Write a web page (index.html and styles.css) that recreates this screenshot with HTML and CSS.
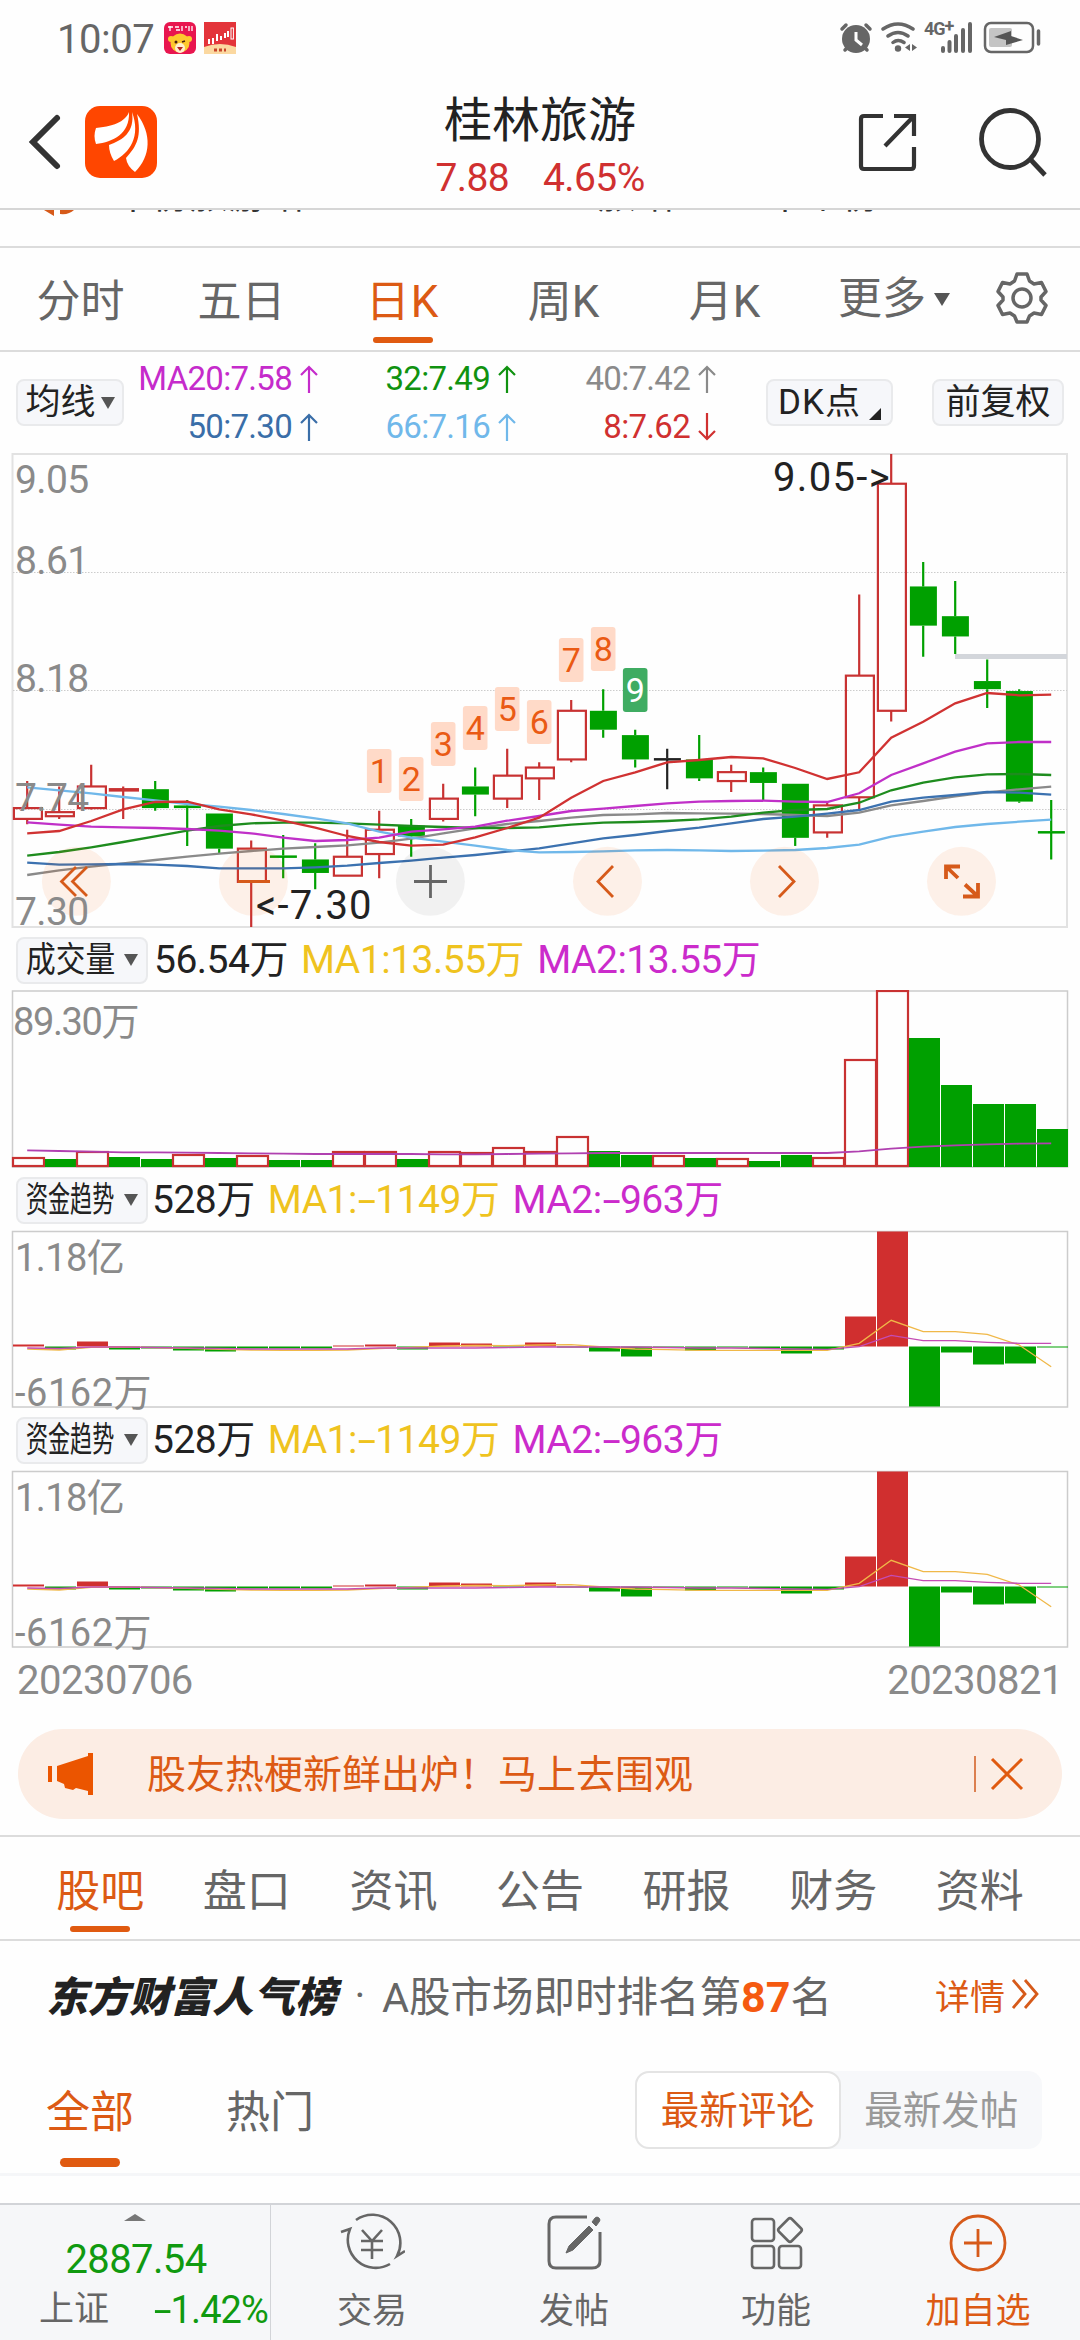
FILE: index.html
```
<!DOCTYPE html>
<html lang="zh">
<head>
    <meta charset="UTF-8">
    <title>桂林旅游</title>
    <link rel="stylesheet" href="styles.css">
</head>
<body>
    <!-- 状态栏 -->
    <div class="status">
        <span class="time">10:07</span>
        <svg class="app-icon" width="32" height="32" viewBox="0 0 32 32">
            <rect width="32" height="32" rx="6" fill="#e8164f"/>
            <path d="M4 5h5M6 4v5M11 5h4M12 8h4M18 4v5M21 5h2M25 4v5M28 4v5" stroke="#fff" stroke-width="1.3"/>
            <circle cx="16" cy="21" r="9.5" fill="#fdc92e"/>
            <circle cx="7" cy="17" r="3" fill="#fdc92e"/><circle cx="25" cy="17" r="3" fill="#fdc92e"/>
            <circle cx="16" cy="26" r="5" fill="#fff0d0"/>
            <circle cx="12" cy="20" r="1.5" fill="#4a2010"/><path d="M18 20l3-1" stroke="#4a2010" stroke-width="1.5"/>
            <path d="M13 25h6l-3 4z" fill="#b5231d"/>
        </svg>
        <svg class="app-icon" width="32" height="32" viewBox="0 0 32 32">
            <rect width="32" height="32" fill="#e3343a"/>
            <path d="M0 25q16-6 32 0v7H0z" fill="#fbd8a0"/>
            <path d="M5 17v5M9 16v6M13 12v7M17 14v4M21 11v5M24 9v6" stroke="#fff" stroke-width="2"/>
            <rect x="27" y="6" width="2.4" height="11" fill="none" stroke="#fff"/>
            <path d="M10 28h3M15 28h3M20 28h2" stroke="#c8452a" stroke-width="3"/>
        </svg>
        <svg class="sys" width="205" height="34" viewBox="838 21 205 34" fill="none" stroke="#666">
            <circle cx="856" cy="39" r="14" fill="#666" stroke="none"/>
            <path d="M842 29l4-4M870 29l-4-4M845 50l3-3M867 50l-3-3" stroke-width="3.5" stroke-linecap="round"/>
            <path d="M856 32v8l6 5" stroke="#fff" stroke-width="3"/>
            <path d="M883 29q15-10 30 0M888 36q10-7 20 0M893 42.500q5-4 11 0" stroke-width="3.500" stroke-linecap="round"/>
            <circle cx="898" cy="48.500" r="3.200" fill="#666" stroke="none"/>
            <path d="M910 44v7l-5-3.500zM912 44v7l5-3.500z" fill="#666" stroke="none"/>
            <path d="M943 48v3M949.500 42v9M956 36v15M963 30v21M970 24v27" stroke-width="4" stroke-linecap="round"/>
            <text x="924" y="35" class="net">4G<tspan dy="-3">+</tspan></text>
            <rect x="985" y="23" width="48" height="29" rx="6" stroke-width="2.500"/>
            <rect x="989" y="28" width="23" height="19" rx="2" fill="#c4c4c4" stroke="none"/>
            <path d="M994 37l17 -6v5l12 4-17 5v-5z" fill="#555" stroke="none"/>
            <path d="M1038.500 31v13" stroke-width="3.500" stroke-linecap="round"/>
        </svg>
    </div>

    <!-- 顶部标题 -->
    <div class="header">
        <svg class="back" width="40" height="60" viewBox="0 0 40 60"><path d="M30 6L6 30l24 24" fill="none" stroke="#333" stroke-width="6" stroke-linecap="round"/></svg>
        <svg class="logo" width="72" height="72" viewBox="0 0 72 72">
            <rect width="72" height="72" rx="15" fill="#ff4600"/>
            <g fill="#fff">
                <path d="M44 6C41 14 32 20 11 22Q8 30 11 38C28 36 45 28 44 6z"/>
                <path d="M47 6C50 26 38 34 24 39Q24 47 29 55C45 47 56 30 47 6z"/>
                <path d="M52 8C57 30 52 40 41 52Q42 60 50 66C66 50 67 28 52 8z"/>
            </g>
        </svg>
        <div class="title">
            <h1>桂林旅游</h1>
            <p><span>7.88</span><span>4.65%</span></p>
        </div>
        <svg class="share" width="62" height="62" viewBox="0 0 62 62" fill="none" stroke="#333" stroke-width="4.200">
            <path d="M26 4H7Q4 4 4 7V54Q4 57 7 57H54Q57 57 57 54V35M37 4H57V24M57 4L28 34"/>
        </svg>
        <svg class="search" width="72" height="72" viewBox="0 0 72 72" fill="none" stroke="#333" stroke-width="4.800">
            <circle cx="33" cy="33" r="28.500"/><path d="M54 54l14 15"/>
        </svg>
    </div>
    <div class="strip">
        <svg width="40" height="10" viewBox="0 0 40 10" fill="#d65a1a"><path d="M4 0h10v6zM20 0h14q-5 5-14 4z"/></svg>
        <span class="s1">十份旅游结</span><span class="s2">6</span><span class="s3">旅结</span><span class="s4">十个份</span>
    </div>

    <!-- K线周期 -->
    <div class="period">
        <span>分时</span><span>五日</span><span class="on">日K</span><span>周K</span><span>月K</span>
        <span class="more">更多<i></i></span>
        <svg width="54" height="54" viewBox="0 0 54 54" fill="none" stroke="#666" stroke-width="3.500" stroke-linejoin="round">
            <path d="M22 3h10l2.500 7 4.500 3 7.500-1.500 4.500 9-5 5.500v3l5 5.500-4.500 9-7.500-1.500-4.500 3-2.500 6H22l-2.500-6-4.500-3-7.500 1.500-4.500-9 5-5.500v-3l-5-5.500 4.500-9L15 13l4.500-3z"/>
            <circle cx="27" cy="27" r="9"/>
        </svg>
    </div>

    <div class="ma-row">
        <div class="btn b-ma">均线<i></i></div>
        <div class="ma-grid" id="maGrid"></div>
        <div class="btn b-dk">DK点<i class="corner"></i></div>
        <div class="btn b-fq">前复权</div>
    </div>
    <svg class="chart" id="kline" width="1080" height="480" viewBox="0 450 1080 480"></svg>

    <div class="ind-row vol">
        <div class="btn ind"><b class="n3">成交量</b><i></i></div>
        <span>56.54万</span><span class="y">MA1:13.55万</span><span class="p">MA2:13.55万</span>
    </div>
    <svg class="chart" id="volume" width="1080" height="180" viewBox="0 990 1080 180"></svg>

    <div class="ind-row">
        <div class="btn ind"><b class="n4">资金趋势</b><i></i></div>
        <span>528万</span><span class="y">MA1:<u>-</u>1149万</span><span class="p">MA2:<u>-</u>963万</span>
    </div>
    <svg class="chart fund" width="1080" height="180" viewBox="0 1230 1080 180"></svg>

    <div class="ind-row">
        <div class="btn ind"><b class="n4">资金趋势</b><i></i></div>
        <span>528万</span><span class="y">MA1:<u>-</u>1149万</span><span class="p">MA2:<u>-</u>963万</span>
    </div>
    <svg class="chart fund" width="1080" height="180" viewBox="0 1230 1080 180"></svg>
    <div class="dates"><span>20230706</span><span>20230821</span></div>

    <!-- 公告条 -->
    <div class="banner">
        <svg width="46" height="42" viewBox="0 0 46 42" fill="#eb5500"><path d="M0 13h4v16H0zM9 13L40 3V0h5v42h-5v-4l-12-3-3 2-8-2-1-4-7-3z"/></svg>
        <span>股友热梗新鲜出炉！马上去围观</span>
        <i></i>
        <svg class="close" width="34" height="34" viewBox="0 0 34 34"><path d="M2 2l30 30M32 2L2 32" stroke="#e05a10" stroke-width="3"/></svg>
    </div>

    <div class="tabs">
        <span class="on">股吧</span><span>盘口</span><span>资讯</span><span>公告</span><span>研报</span><span>财务</span><span>资料</span>
    </div>

    <div class="rank">
        <strong>东方财富人气榜</strong><em>·</em>
        <span>A股市场即时排名第<b>87</b>名</span>
        <a>详情<svg width="28" height="34" viewBox="0 0 28 34" fill="none" stroke="#d65a1a" stroke-width="2.800"><path d="M1 3l12 14L1 31M13 3l12 14-12 14"/></svg></a>
    </div>

    <div class="filter">
        <span class="on">全部</span><span>热门</span>
        <div class="seg"><div class="cur">最新评论</div><div>最新发帖</div></div>
    </div>

    <!-- 底部导航 -->
    <div class="bottom">
        <div class="index">
            <i></i>
            <div class="num">2887.54</div>
            <div class="sz"><span>上证</span><span class="pct"><u>-</u>1.42%</span></div>
        </div>
        <div class="item">
            <svg width="66" height="60" viewBox="0 0 66 60" fill="none" stroke="#666" stroke-width="2.600">
                <path d="M17 7A28 28 0 0 1 58 43l8-5M51 51A28 28 0 0 1 11 16L2 19M23 17l10 11 10-11M22 28h22M22 37h22M33 28v18"/>
            </svg>
            <span>交易</span>
        </div>
        <div class="item">
            <svg width="60" height="60" viewBox="0 0 60 60" fill="none" stroke="#666" stroke-width="3">
                <path d="M43 4H12Q5 4 5 11V48Q5 55 12 55H48Q56 55 56 48V19"/>
                <path d="M45 13l4 4L29 37l-7 3 3-7zM48 9l3-4q2-2 4 0t0 4l-3 4z" fill="#666" stroke-width="1"/>
            </svg>
            <span>发帖</span>
        </div>
        <div class="item">
            <svg width="60" height="60" viewBox="0 0 60 60" fill="none" stroke="#666" stroke-width="2.600">
                <rect x="6" y="6" width="22" height="22" rx="3"/><rect x="6" y="33" width="22" height="22" rx="3"/>
                <rect x="33" y="33" width="22" height="22" rx="3"/>
                <rect x="35" y="8" width="18" height="18" rx="2.500" transform="rotate(45 44 17)"/>
            </svg>
            <span>功能</span>
        </div>
        <div class="item add">
            <svg width="60" height="60" viewBox="0 0 60 60" fill="none" stroke="#d65a1a" stroke-width="2.800"><circle cx="30" cy="30" r="27"/><path d="M30 16v28M16 30h28"/></svg>
            <span>加自选</span>
        </div>
    </div>
    <script src="chart.js"></script>
</body>
</html>
```
FILE: styles.css
```
* {
    box-sizing: border-box;
}
body {
    margin: 0;
    width: 1080px;
    height: 2340px;
    overflow: hidden;
    background: #fefefe;
    font-family: Roboto, "Noto Sans CJK SC", sans-serif;
    color: #666;
    display: flex;
    flex-direction: column;
}
body > * {
    flex: none;
}
svg {
    display: block;
    flex: none;
}
i, em {
    font-style: normal;
}
/* 负号加宽 */
u {
    display: inline-block;
    margin: 0 4px;
    text-decoration: none;
    transform: scaleX(1.7);
}
/* 状态栏 */
.status {
    height: 80px;
    padding: 0 37px 4px 57px;
    display: flex;
    align-items: center;
}
.time {
    width: 107px;
    padding-top: 3px;
    font-size: 40px;
    letter-spacing: -0.5px;
}
.app-icon {
    margin-right: 8px;
}
.sys {
    margin-left: auto;
}
.net {
    font-size: 18px;
    font-weight: 700;
    letter-spacing: -1px;
    fill: #666;
    stroke: none;
}
/* 标题 */
.header {
    height: 130px;
    border-bottom: 2px solid #d6d6d6;
    display: flex;
    align-items: flex-start;
}
.back {
    margin: 32px 18px 0 27px;
}
.logo {
    margin-top: 26px;
}
.title {
    margin-left: 238px;
    width: 290px;
    text-align: center;
}
.title h1 {
    margin: 15px 0 0;
    font-size: 48px;
    font-weight: 400;
    line-height: 52px;
    color: #222;
}
.title p {
    margin: 9px 0 0;
    line-height: 44px;
    font-size: 39px;
    letter-spacing: -0.6px;
    color: #d03030;
}
.title p span + span {
    margin-left: 34px;
}
.share {
    margin: 32px 0 0 172px;
}
.search {
    margin: 26px 0 0 58px;
}
.strip {
    height: 38px;
    border-bottom: 2px solid #dcdcdc;
    display: flex;
    overflow: hidden;
    font-size: 38px;
    line-height: 38px;
    color: #333;
}
.strip svg {
    margin-left: 40px;
}
.strip span {
    margin-top: -34px;
    height: 38px;
    overflow: hidden;
    white-space: nowrap;
}
.s1 {
    margin-left: 34px;
    width: 190px;
}
.s2 {
    margin-left: 44px;
    width: 40px;
}
.s3 {
    margin-left: 210px;
    width: 76px;
}
.s4 {
    margin-left: 92px;
}
/* 周期 */
.period {
    height: 104px;
    border-bottom: 2px solid #dcdcdc;
    display: flex;
    align-items: center;
    font-size: 44px;
}
.period > span {
    position: relative;
    width: 161px;
    height: 102px;
    line-height: 109px;
    text-align: center;
}
.period .on {
    letter-spacing: 1px;
}
.period .more {
    width: 157px;
    padding-left: 33px;
    display: flex;
    align-items: center;
}
.period svg {
    margin: -3px 0 0 33px;
}
.more i, .btn i {
    border: 8px solid transparent;
    border-top: 13px solid #555;
    border-bottom: 0;
}
.more i {
    margin-left: 8px;
}
.on {
    position: relative;
    color: #dc5a14;
}
.on::after {
    content: "";
    position: absolute;
    left: 50%;
    bottom: 7px;
    width: 60px;
    height: 6px;
    margin-left: -30px;
    border-radius: 3px;
    background: #e05a10;
}
.ma-row {
    height: 98px;
    padding: 3px 16px 0;
    display: flex;
    align-items: center;
}
.btn {
    height: 47px;
    border: 2px solid #e9eaec;
    border-radius: 8px;
    background: #f6f7fa;
    color: #222;
    font-size: 35px;
    line-height: 43px;
    display: flex;
    align-items: center;
    justify-content: center;
    white-space: nowrap;
}
.btn i {
    margin-left: 5px;
    border-left-width: 7px;
    border-right-width: 7px;
    border-top-width: 12px;
}
.b-ma {
    width: 108px;
}
.btn .corner {
    align-self: flex-end;
    margin: 0 0 4px 8px;
    border: 0;
    border-left: 12px solid transparent;
    border-bottom: 12px solid #222;
}
.b-dk {
    width: 127px;
    margin-left: 50px;
    letter-spacing: 1px;
}
.b-fq {
    width: 132px;
    margin-left: 39px;
}
.ma-grid {
    display: grid;
    grid-template-columns: 194px 198px 200px;
    grid-auto-rows: 48px;
    font-size: 33px;
    letter-spacing: -0.7px;
}
.ma-grid span {
    display: flex;
    align-items: center;
    justify-content: flex-end;
}
.ma-grid svg {
    margin-left: 8px;
}
/* 图表 */
.chart text {
    font-size: 38px;
    fill: #8a8a8a;
    letter-spacing: -0.6px;
}
.chart .mark {
    font-size: 40px;
    fill: #222;
}
.chart .badge {
    font-size: 34px;
    fill: #ea5a14;
    text-anchor: middle;
    letter-spacing: 0;
}
.chart .badge.white {
    fill: #fff;
}
.ind-row {
    height: 60px;
    padding-left: 16px;
    display: flex;
    align-items: center;
    font-size: 39px;
    letter-spacing: -0.5px;
    color: #222;
    white-space: nowrap;
}
.ind-row span {
    margin-left: 13px;
    line-height: 46px;
}
.ind-row .btn + span {
    margin-left: 4px;
}
.vol .btn + span {
    margin-left: 6px;
}
.ind-row .y {
    color: #efc31f;
}
.ind-row .p {
    color: #cb2bcb;
}
.ind {
    width: 132px;
    justify-content: flex-start;
    padding-left: 8px;
    letter-spacing: 0;
}
.ind b {
    font-weight: 400;
    width: 89px;
    transform-origin: 0 50%;
}
.ind .n3 {
    transform: scaleX(0.85);
}
.ind .n4 {
    transform: scaleX(0.63);
}
.ind i {
    margin-left: 9px;
}
.dates {
    height: 79px;
    padding: 9px 17px 0 17px;
    display: flex;
    justify-content: space-between;
    font-size: 40px;
    line-height: 44px;
    letter-spacing: -0.5px;
    color: #8a8a8a;
}
/* 公告条 */
.banner {
    height: 90px;
    margin: 0 18px 16px;
    padding: 0 38px 0 30px;
    border-radius: 45px;
    background: #fcede4;
    color: #dc5a14;
    font-size: 39px;
    display: flex;
    align-items: center;
}
.banner span {
    margin-left: 53px;
    padding-top: 2px;
    line-height: 50px;
}
.banner i {
    margin-left: auto;
    width: 2px;
    height: 36px;
    background: #dc8050;
}
.banner .close {
    margin-left: 14px;
}
.tabs {
    height: 106px;
    padding: 0 27px;
    border-top: 2px solid #dcdcdc;
    border-bottom: 2px solid #dcdcdc;
    display: flex;
    font-size: 44px;
    line-height: 110px;
    text-align: center;
}
.tabs span {
    flex: 1;
}
/* 人气榜 */
.rank {
    height: 110px;
    padding: 0 40px 4px 46px;
    display: flex;
    align-items: center;
    font-size: 41.5px;
    white-space: nowrap;
}
.rank strong {
    width: 292px;
    color: #222;
    font-size: 41.5px;
    font-weight: 900;
    font-style: italic;
}
.rank em {
    width: 44px;
    text-align: center;
}
.rank b {
    color: #f55a10;
    font-size: 43px;
}
.rank a {
    margin-left: auto;
    display: flex;
    align-items: center;
    color: #dc5a14;
    font-size: 35px;
}
.rank svg {
    margin-left: 7px;
}
.filter {
    height: 125px;
    padding: 0 38px 0 46px;
    border-bottom: 3px solid #f5f6f8;
    display: flex;
    font-size: 44px;
    line-height: 124px;
}
.filter > span {
    margin-right: 92px;
}
.filter .on::after {
    height: 9px;
    bottom: 6px;
    border-radius: 5px;
}
.seg {
    margin: 20px 0 0 auto;
    width: 407px;
    height: 78px;
    border-radius: 14px;
    background: #f7f8fa;
    display: flex;
    font-size: 38.5px;
    line-height: 79px;
    text-align: center;
    color: #999;
}
.seg div {
    flex: 1;
}
.seg .cur {
    border: 2px solid #e4e4e4;
    border-radius: 14px;
    background: #fff;
    color: #dc5a14;
    line-height: 76px;
}
/* 底部 */
.bottom {
    height: 137px;
    margin-top: auto;
    border-top: 2px solid #d2d4d8;
    background: #f6f7f9;
    display: flex;
}
.index {
    width: 271px;
    border-right: 1px solid #d2d4d8;
    white-space: nowrap;
    color: #109a10;
}
.index i {
    display: block;
    width: 22px;
    margin: 9px 0 0 124px;
    border: 11px solid transparent;
    border-top: 0;
    border-bottom: 7px solid #777;
}
.num {
    margin-top: 16px;
    padding-left: 2px;
    text-align: center;
    font-size: 40px;
    line-height: 46px;
    letter-spacing: -0.6px;
}
.sz {
    margin-top: 4px;
    padding: 0 2px 0 39px;
    display: flex;
    justify-content: space-between;
    align-items: center;
    font-size: 35px;
    line-height: 46px;
    color: #666;
}
.pct {
    font-size: 38px;
    letter-spacing: -0.9px;
    color: #109a10;
}
.item {
    width: 202px;
    display: flex;
    flex-direction: column;
    align-items: center;
    font-size: 35px;
    line-height: 46px;
}
.item svg {
    margin: 8px 0 16px;
}
.item.add {
    color: #dc5a14;
}
```
FILE: chart.js
```
const RED = '#c83232';
const GREEN = '#00a000';
const FIRST = 27.2; // 第一根K线中心
const STEP = 32;

// [颜色, 最高, 最低, 实体上沿, 实体下沿]
const candles = [
    ['r', 7.84, 7.68, 7.74, 7.70], ['r', 7.82, 7.70, 7.725, 7.71], ['r', 7.90, 7.735, 7.82, 7.74],
    ['r', 7.82, 7.70, 7.81, 7.805], ['g', 7.84, 7.73, 7.81, 7.74], ['g', 7.77, 7.60, 7.75, 7.74],
    ['g', 7.72, 7.57, 7.72, 7.59], ['r', 7.62, 7.30, 7.59, 7.467], ['g', 7.64, 7.48, 7.565, 7.56],
    ['g', 7.61, 7.44, 7.55, 7.50], ['r', 7.66, 7.49, 7.56, 7.49], ['r', 7.73, 7.48, 7.66, 7.57],
    ['g', 7.70, 7.56, 7.675, 7.635], ['r', 7.83, 7.69, 7.775, 7.70], ['g', 7.89, 7.71, 7.82, 7.79],
    ['r', 7.96, 7.74, 7.86, 7.775], ['r', 7.91, 7.77, 7.89, 7.85], ['r', 8.14, 7.91, 8.10, 7.92],
    ['g', 8.18, 8.00, 8.10, 8.03], ['g', 8.03, 7.89, 8.01, 7.92], ['k', 7.96, 7.81, 7.925, 7.92],
    ['g', 8.01, 7.84, 7.92, 7.85], ['r', 7.90, 7.80, 7.873, 7.84], ['g', 7.89, 7.77, 7.873, 7.833],
    ['g', 7.83, 7.60, 7.83, 7.63], ['r', 7.76, 7.63, 7.75, 7.65], ['r', 8.53, 7.73, 8.23, 7.78],
    ['r', 9.05, 8.06, 8.94, 8.10], ['g', 8.65, 8.30, 8.56, 8.415], ['g', 8.58, 8.31, 8.45, 8.375],
    ['g', 8.29, 8.11, 8.21, 8.18], ['g', 8.18, 7.76, 8.173, 7.764], ['g', 7.77, 7.55, 7.655, 7.65]
];

// 均线
const maLines = {
    '#8a8a8a': [875, 870.3, 866.7, 863.3, 860, 856.7, 853.7, 851, 848.7, 847, 845.3, 842.7, 838.7, 833.3, 828.3, 824, 821, 817.7, 815, 814.3, 813, 813.3, 813.7, 814, 815, 816, 812.7, 805.3, 801, 796.3, 792.3, 789.3, 786.7],
    '#1e8c1e': [855.7, 852, 847.3, 842, 836.3, 830.7, 826, 823.3, 822.7, 822.7, 823.3, 824.7, 826, 827, 828, 828, 827.3, 824.7, 822.7, 822, 821, 819.3, 816.7, 812.7, 810, 809, 802.7, 790.3, 782.7, 777.3, 774.3, 774, 775],
    '#3c72b0': [862.7, 864.7, 864.3, 864, 864.7, 866, 868.3, 868.3, 868.3, 867.3, 865.7, 863, 860.7, 857.7, 855, 851.7, 848.3, 843.3, 838.3, 835, 831, 827.7, 823.3, 819, 816.7, 813.7, 810, 801.7, 797.7, 795, 792, 792.7, 794.7],
    '#70b8ea': [787.3, 790.3, 793.3, 797, 800.3, 804, 806.7, 810, 814, 818.3, 823.3, 831.7, 837.7, 841.7, 845.7, 850, 852.3, 852, 851.3, 850.3, 850, 850.3, 851, 850.7, 850, 848, 844.7, 836.7, 831.7, 827, 824, 821.7, 819.7],
    '#c030c8': [822.3, 824.7, 826.7, 827.3, 828, 829, 830.7, 833.3, 837.7, 841, 840, 837.7, 831.7, 829.3, 826.7, 820.7, 816, 811, 808.7, 806, 803.3, 801.7, 801, 800.7, 801.7, 802, 793.3, 775, 763.3, 751.7, 743.3, 742, 742],
    '#d03232': [833.3, 831, 821, 809.3, 802, 801.7, 809.3, 814.3, 820.7, 827.7, 836, 842, 845.7, 844.7, 837.3, 828, 817.7, 797.7, 781, 772.3, 762.3, 760, 757, 758.3, 768, 779, 772.3, 737.7, 721.7, 703.3, 693, 695.3, 694.7]
};

const cx = i => FIRST + i * STEP;
const py = p => 454 + (9.05 - p) * 270.3;

function line(ys, color, w) {
    return `<polyline points="${ys.map((y, i) => cx(i) + ',' + y).join(' ')}" fill="none" stroke="${color}" stroke-width="${w}"/>`;
}
function rect(x, y, w, h, attr) {
    return `<rect x="${x}" y="${y}" width="${w}" height="${h}" ${attr}/>`;
}

function drawKline() {
    let s = rect(12.5, 454, 1054.5, 473, 'fill="none" stroke="#e2e2e2" stroke-width="2"');
    [572.5, 690.5, 809.5].forEach(y => {
        s += `<path d="M13 ${y}H1067" stroke="#ccc" stroke-dasharray="1.500 1.500"/>`;
    });
    s += rect(955, 654, 112, 5, 'fill="#d3d6db"');
    candles.forEach(([t, high, low, top, bottom], i) => {
        const x = cx(i);
        const color = t === 'r' ? RED : t === 'g' ? GREEN : '#222';
        const y1 = py(top), y2 = py(bottom);
        s += `<path d="M${x} ${py(high)}V${y1}M${x} ${y2}V${py(low)}" stroke="${color}" stroke-width="2.200"/>`;
        if (t === 'r') {
            s += rect(x - 13.3, y1, 28, y2 - y1, `fill="none" stroke="${color}" stroke-width="2.200"`);
        } else {
            s += rect(x - 13.3, y1, 27, Math.max(y2 - y1, 2.5), `fill="${color}"`);
        }
    });
    for (const color in maLines) s += line(maLines[color], color, 2.3);

    // 九转序列标记
    [749, 757, 722, 706, 687, 700, 638, 627, 668].forEach((y, n) => {
        const x = cx(n + 11);
        s += rect(x - 12.3, y, 24.6, 44, `rx="3" fill="${n === 8 ? '#3fac62' : '#ffdac8'}"`);
        s += `<text class="badge${n === 8 ? ' white' : ''}" x="${x}" y="${y + 34}">${n + 1}</text>`;
    });

    // 操作按钮
    [76.4, 253.4, 430.4, 607.5, 784.5, 961.5].forEach((x, i) => {
        s += `<circle cx="${x}" cy="881.300" r="34.500" fill="${i === 2 ? '#000' : '#f06010'}" fill-opacity="${i === 2 ? 0.05 : 0.09}"/>`;
    });
    s += `<g fill="none" stroke="#d65a1a" stroke-width="2.800">
        <path d="M76 867L61.500 881.500L76 896M87 867L72.500 881.500L87 896M238 881.500H270"/>
        <path d="M613 866L598 881.500L613 897M779 866L794 881.500L779 897"/>
        <path d="M946 879V866.500H960M946 866.500L958 878M978 883V896.500H963M978 896.500L965 884.500" stroke-width="3.800"/>
        <path d="M414 881.500H447M430.500 865V898" stroke="#666"/></g>`;

    [['9.05', 493], ['8.61', 574], ['8.18', 692], ['7.74', 811], ['7.30', 925]].forEach(([t, y]) => {
        s += `<text x="15" y="${y}" style="font-size:39px">${t}</text>`;
    });
    s += '<text class="mark" x="256" y="919" textLength="115">&lt;-7.30</text><text class="mark" x="773" y="491" textLength="116">9.05-&gt;</text>';
    document.getElementById('kline').innerHTML = s;
}

function drawVolume() {
    const kinds = 'rgrggrgrggrrgrrrrrggrgrggrrrggggg';
    const h = [8, 8, 14, 10, 8, 11, 9, 10, 7, 7, 14, 14, 8, 14, 13, 18, 14, 29, 16, 12, 10, 9, 7, 6, 12, 8, 106, 175, 129, 82, 63, 63, 38];
    const ma = [1150.3, 1151, 1151.7, 1152.3, 1152.3, 1152.7, 1153, 1153.3, 1153.7, 1154, 1154, 1154, 1154, 1154.3, 1154.3, 1154, 1153.7, 1153.3, 1153, 1153, 1153, 1153, 1153, 1153, 1153, 1153, 1151.3, 1148.7, 1146.7, 1145.3, 1144.3, 1143.7, 1143.3];
    let s = rect(12.5, 991, 1055, 176, 'fill="none" stroke="#ccc" stroke-width="1.500"');
    h.forEach((v, i) => {
        const x = 12 + i * STEP;
        if (kinds[i] === 'r') {
            s += rect(x + 1, 1166 - v, STEP - 1, v, `fill="none" stroke="${RED}" stroke-width="2.200"`);
        } else {
            s += rect(x + 1, 1167 - v, 31, v, `fill="${GREEN}"`);
        }
    });
    s += line(ma, '#b040b0', 1.8);
    s += '<text x="13" y="1035" textLength="126">89.30万</text>';
    document.getElementById('volume').innerHTML = s;
}

function drawFund() {
    // 正数向上, 负数向下
    const v = [2, -3, 5, -3, -2, -4, -5, -2, -2, -2, 1, 2, -3, 4, 3, 0, 4, -1, -5, -10, 0, -4, -1, -2, -7, -3, 30, 115, -60, -6, -18, -17, -1];
    const yellow = [1349, 1350, 1347.3, 1347, 1347.7, 1348.3, 1349.3, 1350, 1350.3, 1350.3, 1350, 1348.7, 1347.3, 1346, 1345.3, 1345.7, 1345, 1344.7, 1347, 1349, 1349.7, 1350.3, 1350.3, 1350.3, 1350.3, 1350.3, 1343.3, 1320.3, 1331.7, 1331.7, 1334.3, 1345, 1366.7];
    const purple = [1348, 1348.5, 1347, 1347, 1347.5, 1348, 1348.5, 1349, 1349, 1349, 1349, 1348, 1348, 1348, 1348, 1347.5, 1347, 1347, 1347, 1347, 1347.5, 1348, 1348, 1348.5, 1349, 1349.3, 1346.7, 1335.3, 1340.7, 1340.7, 1342.3, 1343.3, 1343.3];
    let s = rect(12.5, 1231.5, 1055, 175.5, 'fill="none" stroke="#ccc" stroke-width="1.500"');
    v.forEach((n, i) => {
        const up = n > 0;
        s += rect(13 + i * STEP, up ? 1346.5 - n : 1346.5, 31, Math.max(Math.abs(n), 1), `fill="${up ? '#d02f2f' : GREEN}"`);
    });
    s += line(yellow, '#f0b848', 1.3) + line(purple, '#c44cb4', 1.3);
    s += '<text x="15" y="1271">1.18亿</text><text x="15" y="1406" textLength="136">-6162万</text>';
    document.querySelectorAll('.fund').forEach(el => el.innerHTML = s);
}

// 均线数值
const maValues = [
    ['MA20:7.58', '#c52bcb', 1], ['32:7.49', '#109210', 1], ['40:7.42', '#8a8a8a', 1],
    ['50:7.30', '#3a6ea8', 1], ['66:7.16', '#70b8ea', 1], ['8:7.62', '#d03030', 0]
];
document.getElementById('maGrid').innerHTML = maValues.map(([t, c, up]) =>
    `<span style="color:${c}">${t}<svg width="18" height="28" viewBox="0 0 18 28" fill="none" stroke="currentColor" stroke-width="2.200"><path d="${up ? 'M9 28V2M1 10L9 2L17 10' : 'M9 0V26M1 18L9 26L17 18'}"/></svg></span>`
).join('');

drawKline();
drawVolume();
drawFund();
```
